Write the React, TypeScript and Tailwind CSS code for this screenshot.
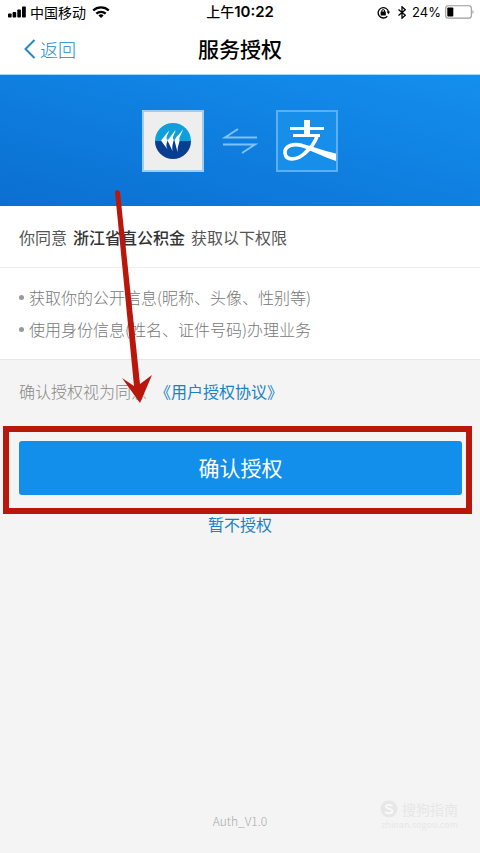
import type { ReactNode } from "react";

const PERMISSIONS = [
  "获取你的公开信息(昵称、头像、性别等)",
  "使用身份信息(姓名、证件号码)办理业务",
];

function StatusBar() {
  return (
    <div className="relative flex h-6 items-center justify-between pr-1.5 pl-2 text-sm text-black">
      <div className="flex items-center gap-1">
        <svg width="18" height="12" viewBox="0 0 18 12" fill="currentColor">
          <rect x="0" y="7.5" width="3.6" height="4" rx="0.8" />
          <rect x="4.6" y="6" width="3.6" height="5.5" rx="0.8" />
          <rect x="9.3" y="3.5" width="3.6" height="8" rx="0.8" />
          <rect x="14" y="0.5" width="3.8" height="11" rx="0.8" />
        </svg>
        <span>中国移动</span>
        <svg className="ml-0.5" width="18" height="12" viewBox="0 0 18 12" fill="none" stroke="currentColor" strokeWidth="2.3">
          <path d="M1.2 4.5a11.2 11.2 0 0 1 15.6 0" />
          <path d="M4.3 7.7a6.8 6.8 0 0 1 9.4 0" />
          <path d="M9 12L6.4 9.5a3.8 3.8 0 0 1 5.2 0Z" fill="currentColor" stroke="none" />
        </svg>
      </div>

      <div className="absolute inset-x-0 text-center font-medium">
        上午<span className="font-['Inter'] text-[15px] font-semibold">10:22</span>
      </div>

      <div className="flex items-center font-['Inter']">
        <svg width="13" height="13" viewBox="0 0 13 13" fill="none" stroke="currentColor" strokeWidth="1.3">
          <path d="M10.3 10.2a5.2 5.2 0 1 1 1.2-4.3" />
          <path d="M9.6 5.6h3.4l-1.5 2.6Z" fill="currentColor" stroke="none" />
          <rect x="3.6" y="5.6" width="5.2" height="3.8" rx="0.4" fill="currentColor" stroke="none" />
          <path d="M4.8 6V5a1.4 1.4 0 0 1 2.8 0v1" strokeWidth="1" />
        </svg>
        <svg className="mr-1.5 ml-2" width="8" height="13" viewBox="0 0 8 13" fill="none" stroke="currentColor" strokeWidth="1.3">
          <path d="M0.5 3.5L7.3 9.3L4 12.2V0.8L7.3 3.7L0.5 9.5" />
        </svg>
        <span className="text-[13px]">24%</span>
        <svg className="ml-1" width="29" height="14" viewBox="0 0 29 14">
          <rect x="0.7" y="0.7" width="25.6" height="12.4" rx="2.4" fill="#fff" stroke="#999" strokeWidth="1.1" />
          <rect x="2.3" y="2.5" width="6" height="9" rx="0.8" fill="#000" />
          <path d="M27.5 5v4c1.4-.5 1.4-3.5 0-4Z" fill="#999" />
        </svg>
      </div>
    </div>
  );
}

function FundLogo() {
  return (
    <div className="flex size-[62px] items-center justify-center border-2 border-[#9dccf5] bg-[#eeeeee]">
      <svg width="36" height="36" viewBox="0 0 36 36">
        <path d="M0 18a18 18 0 0 1 36 0Z" fill="#119fdc" />
        <path d="M0 18a18 18 0 0 0 36 0Z" fill="#063f91" />
        <g fill="#fff">
          <path d="M14 7.5L6 17.5l6.5 9c-3-6 1.5-9-.5-10.5C10.5 14 13.5 11 14 7.5Z" />
          <path d="M20.5 7L12.5 17.5l5 10.5c-1-7 2-10 .8-12C17 14 20 11 20.5 7Z" />
          <path d="M28 6c-2 4.5-7 7-8.5 11.5L22.5 29c0-7 2.5-10 2-12C23.5 14 27 11 28 6Z" />
        </g>
      </svg>
    </div>
  );
}

function AlipayLogo() {
  return (
    <div className="size-[62px] border-2 border-[#5caff2] bg-[#168eea]">
      <svg width="58" height="58" viewBox="0 0 58 58" fill="none" stroke="#fff">
        <path d="M29 8v16" strokeWidth="6" />
        <path d="M12 16.5h34" strokeWidth="3" />
        <path d="M15 23.5h27" strokeWidth="3" />
        <path d="M39.5 23C37 31 32 37 26.5 41.5C20 47.500 8 50 7 41C6.5 33 16 31.5 24 33.5" strokeWidth="3.6" />
        <path d="M23 31.5c10 2.5 17 5.5 35 10v7.5C42 43.5 34 38.5 21 34.5Z" fill="#fff" stroke="none" />
      </svg>
    </div>
  );
}

function Highlight({ children }: { children: ReactNode }) {
  return (
    <div className="ml-[3px] mr-2 border-[6px] border-[#b9170b] pt-[9px] pr-1 pb-[13px] pl-[10px]">
      {children}
    </div>
  );
}

export default function App() {
  return (
    <div className="relative flex min-h-screen flex-col bg-[#f4f4f4] font-['Noto_Sans_CJK_SC',sans-serif] text-base">
      <header className="bg-white">
        <StatusBar />
        <div className="relative flex h-[50px] items-center px-6">
          <button className="z-10 flex items-center gap-1 text-lg font-light text-[#2088cb]">
            <svg width="12" height="20" viewBox="0 0 12 20" fill="none" stroke="currentColor" strokeWidth="2">
              <path d="M10.5 1L1.5 10l9 9" />
            </svg>
            返回
          </button>
          <h1 className="absolute inset-x-0 text-center text-[21px] font-medium text-black">服务授权</h1>
        </div>
      </header>

      <div className="flex h-[132px] items-center justify-center gap-[18px] border-t border-[#9ddcff] bg-linear-to-tr from-[#0b6fd1] to-[#148fee]">
        <FundLogo />
        <svg width="36" height="26" viewBox="0 0 36 26" fill="none" stroke="#7fc1f8" strokeWidth="2">
          <path d="M35 9.5H3L16 1" />
          <path d="M1 16.5h32L20 25" />
        </svg>
        <AlipayLogo />
      </div>

      <section className="bg-white">
        <p className="flex h-[62px] items-center gap-1.5 border-b border-[#eeeeee] px-[19px] text-[#555555]">
          你同意
          <strong className="font-medium text-[#333333]">浙江省直公积金</strong>
          获取以下权限
        </p>
        <ul className="border-b border-[#e6e6e6] px-[19px] pt-[13px] pb-3.5 font-light leading-8 text-[#777777]">
          {PERMISSIONS.map((item) => (
            <li key={item} className="flex items-center gap-[5px]">
              <span className="size-[5px] rounded-full bg-[#999999]" />
              {item}
            </li>
          ))}
        </ul>
      </section>

      <p className="flex h-[66px] items-center gap-2 px-[19px] pb-1 font-light text-[#888888]">
        确认授权视为同意
        <a href="#agreement" className="font-normal text-[#1b82c5]">《用户授权协议》</a>
      </p>

      <Highlight>
        <button className="h-[54px] w-full rounded-[3px] bg-[#128eeb] text-[21px] text-white">确认授权</button>
      </Highlight>
      <button className="self-center leading-5 text-[#1b82c5]">暂不授权</button>

      <footer className="mt-auto pb-5 text-center text-xs leading-6 font-light text-[#aaaaaa]">Auth_V1.0</footer>

      <div className="absolute right-[22px] bottom-[22px] flex flex-col items-end text-[#e7e7e7]">
        <div className="flex items-center gap-1 text-sm leading-5">
          <svg width="18" height="18" viewBox="0 0 18 18" fill="none">
            <circle cx="9" cy="9" r="8.5" fill="#e7e7e7" />
            <path d="M12.5 5.8C9 4 5.5 5 6 7c.5 2 6 1.5 6.3 4C12.5 13.5 8 14 5 12" stroke="#fafafa" strokeWidth="1.8" />
          </svg>
          搜狗指南
        </div>
        <div className="text-[9px] leading-3">zhinan.sogou.com</div>
      </div>

      <svg className="pointer-events-none absolute top-[189px] left-[114px]" width="42" height="216" viewBox="0 0 42 216" fill="#b9170b">
        <path d="M1 3Q3 -1 6 3L26 195L38 186L26 214L8 189L20 197Z" />
      </svg>
    </div>
  );
}
